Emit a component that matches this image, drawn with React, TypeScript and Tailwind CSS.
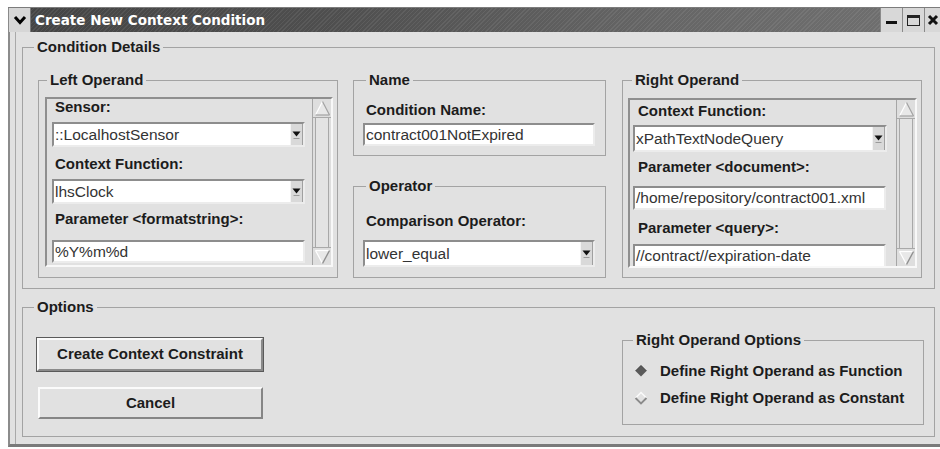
import React from "react";

type Kids = { children?: React.ReactNode; className?: string };

function Legend({ children, className = "" }: Kids) {
  return (
    <legend
      className={`px-[3px] text-[15px] font-bold leading-[18px] whitespace-nowrap text-[#1c1c1c] ${className}`}
    >
      {children}
    </legend>
  );
}

function Group({
  title,
  className = "",
  legendClass = "",
  children,
}: Kids & { title: string; legendClass?: string }) {
  return (
    <fieldset className={`shrink-0 border border-[#a3a3a3] ${className}`}>
      <Legend className={legendClass}>{title}</Legend>
      {children}
    </fieldset>
  );
}

function Label({ children, className = "" }: Kids) {
  return (
    <div
      className={`shrink-0 text-[15px] font-bold leading-[16px] whitespace-nowrap text-[#1c1c1c] ${className}`}
    >
      {children}
    </div>
  );
}

function DropArrow() {
  return (
    <div className="w-[13px] shrink-0 bg-[#d9d9d9] border-l border-l-[#f4f4f4] border-r border-r-[#a0a0a0] flex items-center justify-center">
      <svg width="9" height="13" viewBox="0 0 9 13">
        <polygon points="0.5,3.5 8.5,3.5 4.5,8.5" fill="#111" />
        <line x1="1.5" y1="10.5" x2="7.5" y2="10.5" stroke="#9a9a9a" strokeWidth="1" />
      </svg>
    </div>
  );
}

function Field({
  value,
  select = false,
  className = "",
}: {
  value: string;
  select?: boolean;
  className?: string;
}) {
  return (
    <div
      className={`shrink-0 flex bg-white border-2 border-t-[#8d8d8d] border-l-[#8d8d8d] border-r-[#ececec] border-b-[#ececec] ${className}`}
    >
      <div className="flex-1 min-w-0 pl-[1px] flex items-center overflow-hidden whitespace-nowrap text-[15.5px] leading-none text-[#333]">
        {value}
      </div>
      {select && <DropArrow />}
    </div>
  );
}

function ScrollBar() {
  return (
    <div className="w-[19px] h-full shrink-0 flex flex-col border-l border-l-[#a6a6a6] bg-[#dedede]">
      <div className="h-[19px] shrink-0 border-b border-b-[#a9a9a9] flex items-center justify-center">
        <svg width="17" height="17" viewBox="0 0 17 17">
          <polygon points="8.5,1.5 15.5,15 1.5,15" fill="#e8e8e8" />
          <line x1="8.5" y1="1.5" x2="1.5" y2="15" stroke="#ffffff" strokeWidth="1.2" />
          <line x1="8.5" y1="1.5" x2="15.5" y2="15" stroke="#a2a2a2" strokeWidth="1.2" />
          <line x1="1.5" y1="15" x2="15.5" y2="15" stroke="#a2a2a2" strokeWidth="1.2" />
        </svg>
      </div>
      <div className="flex-1 mx-[2px] border-l border-l-[#a8a8a8] border-r border-r-[#a8a8a8] bg-[#e3e3e3]" />
      <div className="h-[18px] shrink-0 border-t border-t-[#a9a9a9] flex items-center justify-center">
        <svg width="17" height="16" viewBox="0 0 17 16">
          <polygon points="1.5,1.5 15.5,1.5 8.5,14.5" fill="#e8e8e8" />
          <line x1="1.5" y1="1.5" x2="15.5" y2="1.5" stroke="#ffffff" strokeWidth="1.2" />
          <line x1="1.5" y1="1.5" x2="8.5" y2="14.5" stroke="#ffffff" strokeWidth="1.2" />
          <line x1="15.5" y1="1.5" x2="8.5" y2="14.5" stroke="#8f8f8f" strokeWidth="1.4" />
        </svg>
      </div>
    </div>
  );
}

function Sunken({ children, className = "" }: Kids) {
  return (
    <div
      className={`flex h-[170px] overflow-hidden border-2 border-t-[#8f8f8f] border-l-[#8f8f8f] border-r-[#f8f8f8] border-b-[#f8f8f8] ${className}`}
    >
      {children}
    </div>
  );
}

function TitleBar() {
  return (
    <div className="h-[25px] shrink-0 flex items-stretch border-t border-t-[#7c7c7c] bg-[repeating-linear-gradient(135deg,rgba(255,255,255,0.07)_0px,rgba(255,255,255,0.07)_1px,transparent_1px,transparent_3px),linear-gradient(90deg,#444444_0%,#4f4f4f_35%,#666666_70%,#717171_100%)]">
      <div className="w-[23px] shrink-0 bg-[#d6d6d6] border-r border-r-[#7a7a7a] border-l border-l-[#8a8a8a] flex items-center justify-center">
        <svg width="14" height="10" viewBox="0 0 14 10">
          <polyline points="2,2 7,7.5 12,2" fill="none" stroke="#000" strokeWidth="3" />
        </svg>
      </div>
      <div className="ml-[4px] text-white font-['DejaVu_Sans',Verdana,sans-serif] font-bold text-[13.5px] leading-[24px] whitespace-nowrap">
        Create New Context Condition
      </div>
      <div className="ml-auto flex items-stretch">
        <div className="w-[22px] bg-[#d8d8d8] border-l border-l-[#8a8a8a] flex items-end justify-center pb-[8px]">
          <div className="w-[11px] h-[3px] bg-[#111]" />
        </div>
        <div className="w-[22px] bg-[#d8d8d8] border-l border-l-[#8a8a8a] flex items-center justify-center">
          <div className="w-[13px] h-[11px] border border-[#222] border-t-[3px]" />
        </div>
        <div className="w-[24px] bg-[#d8d8d8] border-l border-l-[#8a8a8a] flex items-center pl-[2px]">
          <svg width="12" height="12" viewBox="0 0 12 12">
            <path d="M2 2 L10 10 M10 2 L2 10" stroke="#111" strokeWidth="3" />
          </svg>
        </div>
      </div>
    </div>
  );
}

function Radio({ checked }: { checked: boolean }) {
  return checked ? (
    <svg width="14" height="14" viewBox="0 0 14 14" className="shrink-0">
      <polygon points="7,1.5 12.5,7 7,12.5 1.5,7" fill="#5a5a5a" />
      <polyline points="1.5,7 7,1.5 12.5,7" fill="none" stroke="#3c3c3c" strokeWidth="1" />
    </svg>
  ) : (
    <svg width="14" height="14" viewBox="0 0 14 14" className="shrink-0">
      <polygon points="7,1.5 12.5,7 7,12.5 1.5,7" fill="#e2e2e2" />
      <polyline points="1.5,7 7,1.5 12.5,7" fill="none" stroke="#fbfbfb" strokeWidth="1.4" />
      <polyline points="1.5,7 7,12.5 12.5,7" fill="none" stroke="#8a8a8a" strokeWidth="1.8" />
    </svg>
  );
}

export default function App() {
  return (
    <div className="w-[940px] h-[449px] overflow-hidden bg-white pt-[7px] pl-[8px] font-['Liberation_Sans',Arial,Helvetica,sans-serif]">
      <div className="w-[940px] h-[440px] flex flex-col">
        <TitleBar />
        <div className="flex-1 flex bg-[#e1e1e1] border-l-2 border-l-[#8c8c8c] border-b-[3px] border-b-[#7a7a7a]">
          <div className="flex-1 ml-[5px] border-l border-l-[#a9a9a9] pl-[6px] flex flex-col">
            {/* Condition Details */}
            <fieldset className="mt-[6px] w-[913px] shrink-0 border border-[#a3a3a3] pl-[15px] pr-[11px] pt-[15px] pb-[10px]">
              <Legend className="-ml-[4px]">Condition Details</Legend>
              <div className="flex items-start">
                {/* Left operand */}
                <Group
                  title="Left Operand"
                  className="w-[300px] h-[207px] pl-[6px] pt-[8px]"
                  legendClass="ml-[2px]"
                >
                  <Sunken className="w-[288px]">
                    <div className="w-[253px] ml-[5px] flex flex-col">
                      <Label className="ml-[3px]">Sensor:</Label>
                      <Field className="mt-[7px] h-[25px]" value="::LocalhostSensor" select />
                      <Label className="ml-[3px] mt-[9px]">Context Function:</Label>
                      <Field className="mt-[7px] h-[25px]" value="lhsClock" select />
                      <Label className="ml-[3px] mt-[7px]">Parameter &lt;formatstring&gt;:</Label>
                      <Field className="mt-[13px] h-[23px]" value="%Y%m%d" />
                    </div>
                    <div className="ml-auto h-full">
                      <ScrollBar />
                    </div>
                  </Sunken>
                </Group>

                {/* Name and operator */}
                <div className="ml-[15px] flex flex-col">
                  <Group title="Name" className="w-[253px] h-[85px] pl-[9px]" legendClass="ml-[3px]">
                    <Label className="ml-[3px] mt-[13px]">Condition Name:</Label>
                    <Field className="mt-[5px] h-[23px] w-[232px]" value="contract001NotExpired" />
                  </Group>
                  <Group
                    title="Operator"
                    className="mt-[21px] w-[253px] h-[101px] pl-[9px]"
                    legendClass="ml-[3px]"
                  >
                    <Label className="ml-[3px] mt-[18px]">Comparison Operator:</Label>
                    <Field className="mt-[11px] h-[27px] w-[232px]" value="lower_equal" select />
                  </Group>
                </div>

                {/* Right operand */}
                <Group
                  title="Right Operand"
                  className="ml-[16px] w-[300px] h-[207px] pl-[5px] pt-[9px]"
                  legendClass="ml-[4px]"
                >
                  <Sunken className="w-[289px]">
                    <div className="w-[254px] ml-[3px] flex flex-col overflow-hidden">
                      <Label className="ml-[5px] mt-[3px]">Context Function:</Label>
                      <Field className="mt-[6px] h-[27px]" value="xPathTextNodeQuery" select />
                      <Label className="ml-[5px] mt-[7px]">Parameter &lt;document&gt;:</Label>
                      <Field className="mt-[11px] h-[24px] w-[253px]" value="/home/repository/contract001.xml" />
                      <Label className="ml-[5px] mt-[10px]">Parameter &lt;query&gt;:</Label>
                      <Field className="mt-[8px] h-[24px] w-[253px]" value="//contract//expiration-date" />
                    </div>
                    <div className="ml-auto h-full">
                      <ScrollBar />
                    </div>
                  </Sunken>
                </Group>
              </div>
            </fieldset>

            {/* Options */}
            <fieldset className="mt-[9px] w-[913px] h-[139px] shrink-0 border border-[#a3a3a3] pl-[13px] pr-[10px] pt-[21px]">
              <Legend className="-ml-[2px]">Options</Legend>
              <div className="flex items-start justify-between">
                <div className="flex flex-col">
                  <button
                    type="button"
                    className="w-[228px] h-[35px] border border-[#5a5a5a] bg-[#e1e1e1] p-0"
                  >
                    <div className="h-full border-2 border-t-[#fbfbfb] border-l-[#fbfbfb] border-r-[#8a8a8a] border-b-[#8a8a8a] flex items-center justify-center text-[15px] font-bold text-[#1c1c1c] whitespace-nowrap">
                      Create Context Constraint
                    </div>
                  </button>
                  <button
                    type="button"
                    className="mt-[15px] ml-[2px] w-[225px] h-[32px] bg-[#e1e1e1] border-2 border-t-[#fbfbfb] border-l-[#fbfbfb] border-r-[#858585] border-b-[#858585] flex items-center justify-center text-[15px] font-bold text-[#1c1c1c]"
                  >
                    Cancel
                  </button>
                </div>
                <Group
                  title="Right Operand Options"
                  className="-mt-[6px] w-[302px] h-[94px] pl-[11px]"
                  legendClass="-ml-[1px]"
                >
                  <div className="mt-[13px] h-[18px] flex items-center">
                    <Radio checked />
                    <span className="ml-[12px] text-[15px] font-bold text-[#1c1c1c] whitespace-nowrap">
                      Define Right Operand as Function
                    </span>
                  </div>
                  <div className="mt-[9px] h-[18px] flex items-center">
                    <Radio checked={false} />
                    <span className="ml-[12px] text-[15px] font-bold text-[#1c1c1c] whitespace-nowrap">
                      Define Right Operand as Constant
                    </span>
                  </div>
                </Group>
              </div>
            </fieldset>
          </div>
        </div>
      </div>
    </div>
  );
}
